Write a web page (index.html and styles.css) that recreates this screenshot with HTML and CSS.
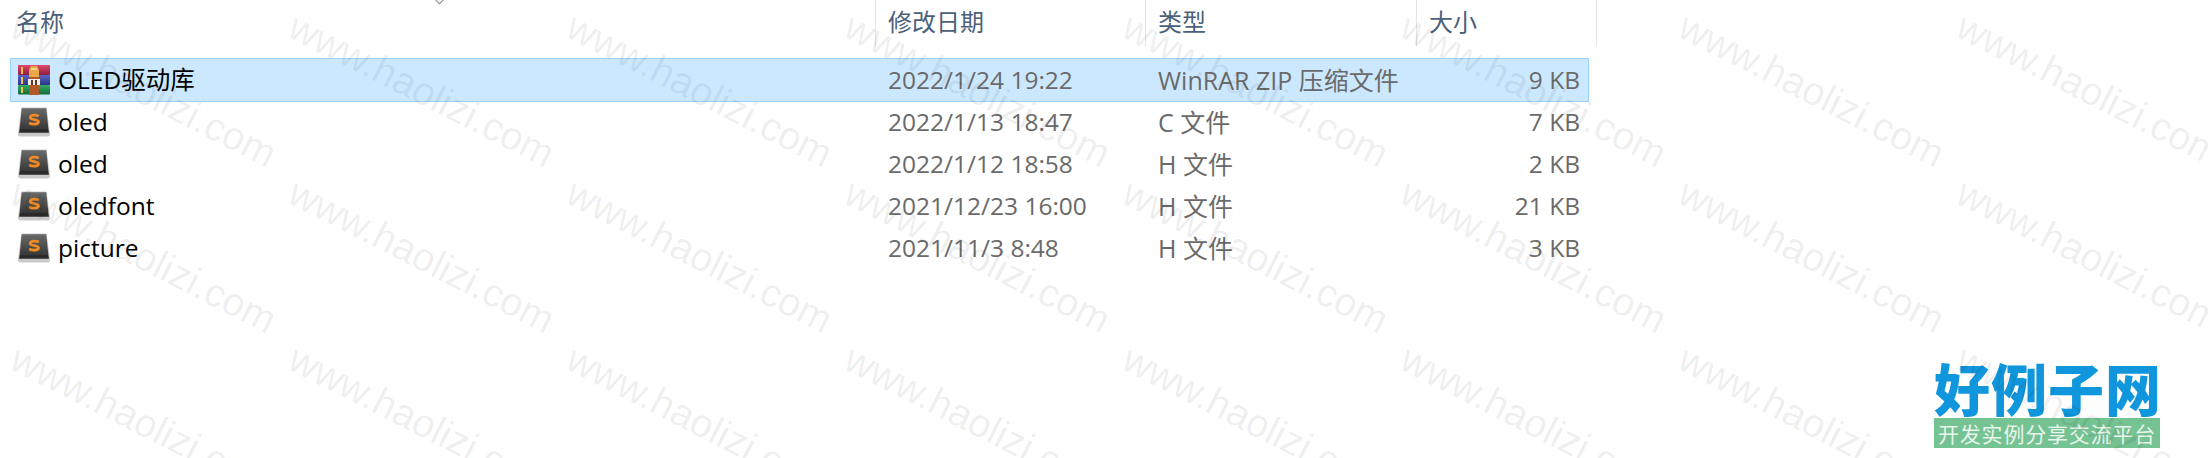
FILE: index.html
```html
<!DOCTYPE html>
<html lang="zh-CN">
<head>
  <meta charset="UTF-8">
  <title>OLED</title>
  <link rel="stylesheet" href="styles.css">
</head>
<body>
  <svg class="defs" width="0" height="0">
    <defs>
      <linearGradient id="bookRed" x1="0" y1="0" x2="0" y2="1">
        <stop offset="0" stop-color="#e0486e"/>
        <stop offset="1" stop-color="#8f1c3f"/>
      </linearGradient>
      <linearGradient id="bookBlue" x1="0" y1="0" x2="0" y2="1">
        <stop offset="0" stop-color="#5a66c4"/>
        <stop offset="1" stop-color="#2d3588"/>
      </linearGradient>
      <linearGradient id="bookGreen" x1="0" y1="0" x2="0" y2="1">
        <stop offset="0" stop-color="#35ad63"/>
        <stop offset="1" stop-color="#12683a"/>
      </linearGradient>
      <linearGradient id="keyTop" x1="0" y1="0" x2="0" y2="1">
        <stop offset="0" stop-color="#6a6a6a"/>
        <stop offset="1" stop-color="#383838"/>
      </linearGradient>
    </defs>
    <symbol id="rar" viewBox="0 0 32 30">
      <rect x="0" y="0" width="32" height="10" rx="1" fill="url(#bookRed)"/>
      <rect x="0" y="10" width="32" height="10" fill="url(#bookBlue)"/>
      <rect x="0" y="20" width="32" height="9.500" rx="1" fill="url(#bookGreen)"/>
      <rect x="3" y="2" width="2" height="7" fill="#f2c23e"/>
      <rect x="3" y="12" width="2" height="7" fill="#f2c23e"/>
      <rect x="3" y="22" width="2" height="6" fill="#f2c23e"/>
      <path d="M11 5 L13 1 H19 L21 5 V12 H11 Z" fill="#e9a94a"/>
      <rect x="13" y="3" width="6" height="2" fill="#f7d98a"/>
      <rect x="11" y="12" width="10" height="18" fill="#b2592c"/>
      <rect x="10" y="14" width="12" height="6" fill="#f4eee4"/>
      <rect x="13" y="15" width="2" height="5" fill="#5b3a22"/>
      <rect x="17" y="15" width="2" height="5" fill="#5b3a22"/>
    </symbol>
    <symbol id="sublime" viewBox="0 0 30 27">
      <path d="M3 0 H26 Q27 0 27 1 L30 24 Q30 27 28 27 H2 Q0 27 0 24 L3 1 Q3 0 4 0 Z" fill="#c9c9c9"/>
      <path d="M3.500 0.500 H26.500 L28.500 20 H1.500 Z" fill="url(#keyTop)"/>
      <path d="M1.500 20 H28.500 L29 23.500 H1 Z" fill="#2b2b2b"/>
      <path d="M19.500 8 C17 6.500 12 6.500 11.500 9 C11 12 19.500 10.500 19.200 13.500 C19 16 13.500 16 10.500 14.500" fill="none" stroke="#f28a22" stroke-width="2.600"/>
    </symbol>
  </svg>

  <div class="header">
    <div class="col name">名称<span class="sort"></span></div>
    <div class="col date">修改日期</div>
    <div class="col type">类型</div>
    <div class="col size">大小</div>
  </div>

  <div class="rows">
    <div class="row selected">
      <div class="cell name"><svg class="icon"><use href="#rar"/></svg>OLED驱动库</div>
      <div class="cell date">2022/1/24 19:22</div>
      <div class="cell type">WinRAR ZIP 压缩文件</div>
      <div class="cell size">9 KB</div>
    </div>
    <div class="row">
      <div class="cell name"><svg class="icon"><use href="#sublime"/></svg>oled</div>
      <div class="cell date">2022/1/13 18:47</div>
      <div class="cell type">C 文件</div>
      <div class="cell size">7 KB</div>
    </div>
    <div class="row">
      <div class="cell name"><svg class="icon"><use href="#sublime"/></svg>oled</div>
      <div class="cell date">2022/1/12 18:58</div>
      <div class="cell type">H 文件</div>
      <div class="cell size">2 KB</div>
    </div>
    <div class="row">
      <div class="cell name"><svg class="icon"><use href="#sublime"/></svg>oledfont</div>
      <div class="cell date">2021/12/23 16:00</div>
      <div class="cell type">H 文件</div>
      <div class="cell size">21 KB</div>
    </div>
    <div class="row">
      <div class="cell name"><svg class="icon"><use href="#sublime"/></svg>picture</div>
      <div class="cell date">2021/11/3 8:48</div>
      <div class="cell type">H 文件</div>
      <div class="cell size">3 KB</div>
    </div>
  </div>

  <div class="logo">
    <div class="logo-title">好例子网</div>
    <div class="logo-band">开发实例分享交流平台</div>
  </div>

  <div class="watermark" id="watermark"></div>

  <script>
    // the stamp repeats over the whole shot
    const watermark = document.getElementById('watermark');
    for (let i = 0; i < 24; i++) {
      const cell = document.createElement('div');
      cell.className = 'stamp';
      cell.textContent = 'www.haolizi.com';
      watermark.appendChild(cell);
    }
  </script>
</body>
</html>
```

FILE: styles.css
```css
html, body {
  height: 458px;
  overflow: hidden;
}
body {
  margin: 0;
  width: 2208px;
  position: relative;
  background-color: #fff;
  font-family: "Open Sans", "Noto Sans CJK SC", sans-serif;
  font-size: 24.500px;
}
.defs {
  position: absolute;
}
.header {
  display: flex;
  width: 1597px;
  height: 46px;
  color: #4c607a;
  line-height: 44px;
}
.col {
  box-sizing: border-box;
  border-right: 1px solid #e5e5e5;
  padding-left: 12px;
  font-size: 24px;
  position: relative;
}
.col.name {
  width: 876px;
  padding-left: 16px;
}
.col.date {
  width: 270px;
}
.col.type {
  width: 271px;
}
.col.size {
  width: 180px;
}
.sort {
  position: absolute;
  left: 436px;
  top: -4px;
  width: 6px;
  height: 6px;
  border-right: 1px solid #888;
  border-bottom: 1px solid #888;
  transform: rotate(45deg);
}
.rows {
  margin: 13px 0 0 11px;
  width: 1577px;
}
.row {
  display: flex;
  height: 42px;
  line-height: 42px;
  color: #6a6a6a;
}
.row.selected {
  background-color: #cce8ff;
  outline: 1px solid #99d1ff;
}
.cell {
  box-sizing: border-box;
  white-space: nowrap;
}
.cell.name {
  display: flex;
  align-items: center;
  gap: 8px;
  width: 865px;
  padding-left: 7px;
  color: #000;
}
.cell.date {
  width: 270px;
  padding-left: 12px;
}
.cell.type {
  width: 271px;
  padding-left: 12px;
  font-size: 25px;
}
.cell.size {
  width: 171px;
  padding-right: 8px;
  text-align: right;
}
.icon {
  width: 32px;
  height: 30px;
}
.watermark {
  position: absolute;
  top: 0;
  left: 0;
  width: 2208px;
  height: 458px;
  overflow: hidden;
  display: grid;
  grid-template-columns: repeat(8, 278px);
  grid-auto-rows: 166px;
  pointer-events: none;
}
.stamp {
  height: 166px;
  width: 278px;
  padding: 5px 0 0 17px;
  box-sizing: border-box;
  white-space: nowrap;
  font-family: "Liberation Sans", sans-serif;
  font-size: 39.500px;
  line-height: 1;
  color: rgba(0, 0, 0, 0.07);
  transform-origin: 17px 17px;
  transform: rotate(27deg);
}
.logo {
  position: absolute;
  left: 1934px;
  top: 356px;
  width: 226px;
}
.logo-title {
  font-family: "Noto Sans CJK SC", sans-serif;
  font-weight: 900;
  font-size: 56px;
  line-height: 62px;
  letter-spacing: 1px;
  color: #0f96dc;
  white-space: nowrap;
}
.logo-band {
  height: 30px;
  background-color: #75c293;
  color: #e8f5ec;
  font-family: "Noto Sans CJK SC", sans-serif;
  font-size: 21px;
  line-height: 30px;
  letter-spacing: 0.800px;
  padding-left: 4px;
  white-space: nowrap;
  overflow: hidden;
}
```
